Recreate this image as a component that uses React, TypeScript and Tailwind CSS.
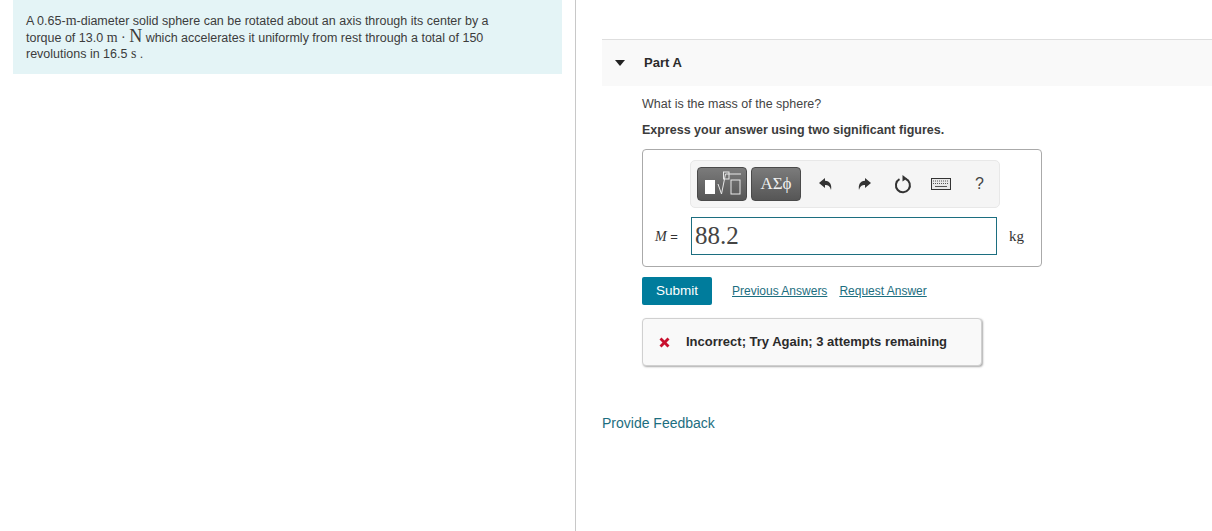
import React from 'react';

const sans = "font-['Liberation_Sans',Arial,sans-serif]";
const serif = "font-['Liberation_Serif','Times_New_Roman',serif]";

const Toolbar = () => (
  <div className="ml-[47px] flex h-[48px] w-[310px] items-center rounded-[5px] border border-[#e8e8e8] bg-[#f5f5f5] pl-[6px]">
    <div className="flex h-[34px] w-[50px] items-center justify-center rounded-[4px] border border-[#4a4a4a] bg-gradient-to-b from-[#7b7b7b] to-[#565656]">
      <svg width="44" height="30" viewBox="0 0 44 30" fill="none">
        <rect x="5" y="11" width="10" height="14" fill="#fff" />
        <rect x="23.5" y="3" width="5.5" height="7" stroke="#e8e8e8" />
        <path d="M18 15l3.5 10 4-20H41" stroke="#e8e8e8" />
        <rect x="31" y="11" width="9" height="14" stroke="#e8e8e8" />
      </svg>
    </div>
    <div className={`ml-[4px] flex h-[34px] w-[50px] items-center justify-center rounded-[4px] border border-[#4a4a4a] bg-gradient-to-b from-[#7b7b7b] to-[#565656] text-[17px] text-[#f0f0f0] ${serif}`}>
      ΑΣϕ
    </div>
    <svg className="ml-[17px]" width="16" height="16" viewBox="0 0 16 16" fill="#333">
      <path d="M7 2L1 7l6 5V9c3 0 5 1 6 5 1-5-1-9-6-9.200z" />
    </svg>
    <svg className="ml-[22px]" width="16" height="16" viewBox="0 0 16 16" fill="#333">
      <path d="M9 2l6 5-6 5V9c-3 0-5 1-6 5-1-5 1-9 6-9.200z" />
    </svg>
    <svg className="ml-[22px]" width="18" height="20" viewBox="0 0 18 20" fill="none">
      <path d="M5.500 5.200a7 7 0 1 0 6 -.4" stroke="#333" strokeWidth="2" />
      <path d="M8.500 1l4.500 3.500-4.500 3z" fill="#333" />
    </svg>
    <svg className="ml-[19px]" width="20" height="13" viewBox="0 0 20 13" fill="none">
      <rect x=".5" y=".5" width="19" height="11" fill="#e8e8e8" stroke="#333" />
      <path d="M2 3h16M2 5.500h16" stroke="#555" strokeDasharray="1 1" />
      <path d="M4 8.500h12" stroke="#555" />
    </svg>
    <span className={`ml-[24px] text-[16px] text-[#444] ${sans}`}>?</span>
  </div>
);

export default function App() {
  return (
    <div className={`flex h-[531px] w-[1212px] overflow-hidden bg-white text-[#333] ${sans}`}>
      <div className="h-full w-[576px] shrink-0 border-r border-[#c8c8c8] pl-[13px]">
        <div className="h-[74px] w-[549px] bg-[#e4f4f6] px-[13px] pt-[13px] text-[12.500px] leading-[16px] text-[#3c3c3c]">
          A 0.65-<span className={`text-[14px] ${serif}`}>m</span>-diameter solid sphere can be rotated about an axis through its center by a
          <br />
          torque of 13.0 <span className={`text-[14px] ${serif}`}>m</span> <span className={`text-[14px] ${serif}`}>·</span> <span className={`text-[18px] leading-[14px] ${serif}`}>N</span> which accelerates it uniformly from rest through a total of 150
          <br />
          revolutions in 16.5 <span className={`text-[14px] ${serif}`}>s</span> .
        </div>
      </div>

      <div className="flex-1 pl-[26px] pt-[39px]">
        <div className="flex h-[47px] items-center border-t border-[#dedede] bg-[#f9f9f9] pl-[13px]">
          <div className="h-0 w-0 border-x-[5.500px] border-t-[6px] border-x-transparent border-t-[#222]" />
          <span className="ml-[19px] text-[13px] font-bold text-[#2b2b2b]">Part A</span>
        </div>

        <div className="pl-[40px]">
          <p className="mt-[10px] text-[12.500px] leading-[16px] text-[#444]">What is the mass of the sphere?</p>
          <p className="mt-[10px] text-[12.500px] font-bold leading-[16px] text-[#3c3c3c]">Express your answer using two significant figures.</p>

          <div className="mt-[11px] h-[118px] w-[400px] rounded-[4px] border border-[#aaa] pt-[10px]">
            <Toolbar />
            <div className="mt-[9px] flex items-center">
              <span className={`ml-[12px] w-[36px] text-[14px] text-[#333] ${serif}`}>
                <i>M</i> <span className={`text-[13px] ${sans}`}>=</span>
              </span>
              <div className={`flex h-[38px] w-[306px] items-center border border-[#1c6e80] pl-[3px] text-[25px] text-[#444] ${serif}`}>88.2</div>
              <span className={`ml-[12px] text-[15px] text-[#333] ${serif}`}>kg</span>
            </div>
          </div>

          <div className="mt-[10px] flex items-center">
            <div className="flex h-[28px] w-[70px] items-center justify-center rounded-[2px] bg-[#007c9c] text-[13.500px] text-white">Submit</div>
            <a className="ml-[20px] text-[12px] text-[#1c6e80] underline">Previous Answers</a>
            <a className="ml-[12px] text-[12px] text-[#1c6e80] underline">Request Answer</a>
          </div>

          <div className="mt-[13px] flex h-[48px] w-[340px] items-center rounded-[4px] border border-[#d0d0d0] bg-[#f9f9f9] pl-[15px] shadow-[1px_1px_2px_#aaa]">
            <svg width="13" height="13" viewBox="0 0 13 13">
              <path d="M1.500 3.500l2-2L6.500 4.500l3-3 2 2-3 3 3 3-2 2-3-3-3 3-2-2 3-3z" fill="#c8102e" />
            </svg>
            <span className="ml-[15px] text-[13px] font-bold text-[#2b2b2b]">Incorrect; Try Again; 3 attempts remaining</span>
          </div>
        </div>

        <a className="mt-[49px] block text-[14px] leading-[16px] text-[#1c6e80]">Provide Feedback</a>
      </div>
    </div>
  );
}
